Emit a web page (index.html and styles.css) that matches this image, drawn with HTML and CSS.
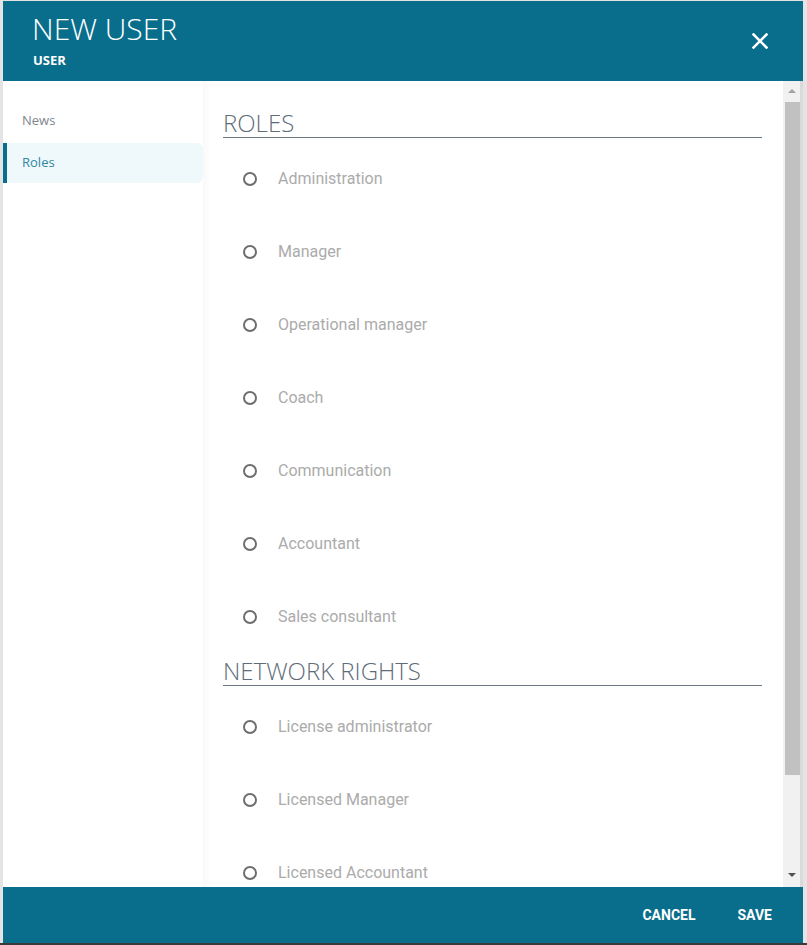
FILE: index.html
```html
<!DOCTYPE html>
<html lang="en">
<head>
    <meta charset="UTF-8">
    <meta name="viewport" content="width=device-width, initial-scale=1.0">
    <title>New user</title>
    <link rel="stylesheet" href="styles.css">
</head>
<body>

    <div class="dialog">
        <!-- Header -->
        <div class="dialog-header">
            <div class="titles">
                <h1>NEW USER</h1>
                <div class="subtitle">USER</div>
            </div>
            <button class="close-btn" aria-label="Close">
                <svg width="16" height="16" viewBox="0 0 16 16">
                    <path d="M1.5 1.5 L14.5 14.5 M14.5 1.5 L1.5 14.5" stroke="#fff" stroke-width="2.6" stroke-linecap="square"/>
                </svg>
            </button>
        </div>

        <div class="dialog-body">
            <!-- Menu de gauche -->
            <ul class="side-nav">
                <li>News</li>
                <li class="active">Roles</li>
            </ul>

            <div class="content">
                <h2>ROLES</h2>
                <ul class="radio-list">
                    <li><span class="radio"></span>Administration</li>
                    <li><span class="radio"></span>Manager</li>
                    <li><span class="radio"></span>Operational manager</li>
                    <li><span class="radio"></span>Coach</li>
                    <li><span class="radio"></span>Communication</li>
                    <li><span class="radio"></span>Accountant</li>
                    <li><span class="radio"></span>Sales consultant</li>
                </ul>

                <h2>NETWORK RIGHTS</h2>
                <ul class="radio-list">
                    <li><span class="radio"></span>License administrator</li>
                    <li><span class="radio"></span>Licensed Manager</li>
                    <li><span class="radio"></span>Licensed Accountant</li>
                </ul>
            </div>

            <!-- Barre de défilement -->
            <div class="scrollbar">
                <span class="arrow up"></span>
                <span class="thumb"></span>
                <span class="arrow down"></span>
            </div>
        </div>

        <!-- Footer -->
        <div class="dialog-footer">
            <button>CANCEL</button>
            <button>SAVE</button>
        </div>
    </div>

</body>
</html>
```

FILE: styles.css
```css
html, body {
    margin: 0;
    padding: 0;
}

body {
    background-color: #e4e4e4;
    padding: 1px 4px 0 3px;
    height: 945px;
    box-sizing: border-box;
    border-bottom: 2px solid #3a3a3a;
    overflow: hidden;
}

.dialog {
    width: 800px;
    height: 942px;
    display: flex;
    flex-direction: column;
    background-color: white;
}

/* Header */
.dialog-header {
    height: 80px;
    flex-shrink: 0;
    background-color: #086e8c;
    color: white;
    display: flex;
    justify-content: space-between;
    align-items: center;
    padding: 0 35px 0 29px;
}

.dialog-header h1 {
    margin: 0;
    font-family: "Open Sans", sans-serif;
    font-weight: 300;
    font-size: 30px;
    line-height: 34px;
    margin-top: -2px;
}

.subtitle {
    font-family: "Open Sans", sans-serif;
    font-weight: 700;
    font-size: 13px;
    line-height: 16px;
    margin-top: 6px;
    margin-left: 1px;
}

.close-btn {
    background: none;
    border: none;
    padding: 0;
    width: 16px;
    height: 16px;
    margin-top: -1px;
    cursor: pointer;
}

.close-btn svg {
    display: block;
}

/* Body */
.dialog-body {
    flex: 1;
    display: flex;
    min-height: 0;
    overflow: hidden;
}

.side-nav {
    width: 200px;
    flex-shrink: 0;
    margin: 0;
    padding: 19px 0 0 0;
    list-style-type: none;
    box-shadow: 3px 0 8px rgba(0, 0, 0, 0.035);
    position: relative;
    z-index: 1;
    font-family: "Open Sans", sans-serif;
    font-size: 13px;
}

.side-nav li {
    height: 40px;
    line-height: 40px;
    padding-left: 15px;
    margin-bottom: 3px;
    color: #80868d;
    border-left: 4px solid transparent;
}

.side-nav li.active {
    background-color: #eff8fa;
    border-left-color: #086e8c;
    color: #2f87a1;
    border-radius: 0 6px 6px 0;
    line-height: 38px;
}

.content {
    flex: 1;
    overflow: hidden;
    padding: 0 21px 0 20px;
}

.content h2 {
    margin: 0;
    margin-top: 27px;
    height: 29px;
    line-height: 29px;
    font-family: "Open Sans", sans-serif;
    font-weight: 300;
    font-size: 24px;
    color: #5e6b78;
    border-bottom: 1px solid #6b7783;
}

.content h2 + .radio-list + h2 {
    margin-top: 3px;
}

.radio-list {
    margin: 0;
    padding: 4px 0 0 0;
    list-style-type: none;
}

.radio-list li {
    height: 73px;
    display: flex;
    align-items: center;
    font-family: Roboto, sans-serif;
    font-size: 16px;
    color: #ababab;
}

.radio {
    width: 10px;
    height: 10px;
    border: 2px solid #6e6e6e;
    border-radius: 50%;
    margin-left: 20px;
    margin-right: 21px;
    flex-shrink: 0;
}

/* Scrollbar */
.scrollbar {
    width: 17px;
    flex-shrink: 0;
    background-color: #f1f1f1;
    border-right: 3px solid #dadada;
    display: flex;
    flex-direction: column;
    align-items: center;
    padding-top: 8px;
    box-sizing: content-box;
}

.arrow {
    width: 0;
    height: 0;
    border-left: 4px solid transparent;
    border-right: 4px solid transparent;
}

.arrow.up {
    border-bottom: 4px solid #a3a3a3;
}

.arrow.down {
    border-top: 4px solid #505050;
    margin-top: 98px;
}

.thumb {
    width: 15px;
    height: 673px;
    margin-top: 9px;
    margin-left: 2px;
    background-color: #c1c1c1;
}

/* Footer */
.dialog-footer {
    height: 56px;
    flex-shrink: 0;
    background-color: #086e8c;
    display: flex;
    justify-content: flex-end;
    align-items: center;
    padding-right: 15px;
    gap: 10px;
}

.dialog-footer button {
    background: none;
    border: none;
    color: white;
    font-family: Roboto, sans-serif;
    font-weight: 700;
    font-size: 14px;
    padding: 8px 16px;
    cursor: pointer;
}
```
